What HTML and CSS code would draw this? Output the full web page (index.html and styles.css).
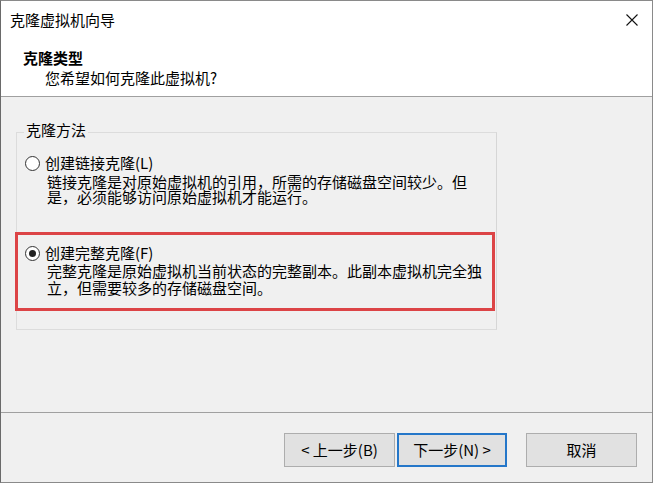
FILE: index.html
```html
<!DOCTYPE html>
<html lang="zh-CN">
<head>
<meta charset="utf-8">
<title>克隆虚拟机向导</title>
<link rel="stylesheet" href="styles.css">
</head>
<body>
<div class="window">
  <div class="titlebar">
    <span class="title">克隆虚拟机向导</span>
    <svg class="close" width="12" height="12" viewBox="0 0 12 12"><path d="M0.5 0.5 L11.5 11.5 M11.5 0.5 L0.5 11.5" stroke="#111" stroke-width="1.1" fill="none"/></svg>
  </div>
  <div class="header">
    <div class="h-title">克隆类型</div>
    <div class="h-sub">您希望如何克隆此虚拟机?</div>
  </div>
  <div class="content">
    <div class="group">
      <span class="legend">克隆方法</span>
      <div class="option">
        <div class="opt-label"><span class="radio"></span><span>创建链接克隆(L)</span></div>
        <div class="desc d1">链接克隆是对原始虚拟机的引用，所需的存储磁盘空间较少。但<br>是，必须能够访问原始虚拟机才能运行。</div>
      </div>
      <div class="option opt2">
        <div class="opt-label"><span class="radio checked"></span><span>创建完整克隆(F)</span></div>
        <div class="desc d2">完整克隆是原始虚拟机当前状态的完整副本。此副本虚拟机完全独<br>立，但需要较多的存储磁盘空间。</div>
      </div>
      <div class="highlight"></div>
    </div>
  </div>
  <div class="footer">
    <button class="btn back">&lt; 上一步(B)</button>
    <button class="btn next">下一步(N) &gt;</button>
    <button class="btn cancel">取消</button>
  </div>
</div>
</body>
</html>
```
FILE: styles.css
```css
html, body {
  margin: 0;
  padding: 0;
  background: #ffffff;
}
body {
  font-family: "Noto Sans CJK SC", "Noto Sans", sans-serif;
  font-size: 15px;
  color: #000;
}
.window {
  width: 653px;
  height: 483px;
  box-sizing: border-box;
  border: 1px solid #8a8a8a;
  border-left-color: #6a6a6a;
  display: flex;
  flex-direction: column;
  background: #f0f0f0;
}
.titlebar {
  height: 38px;
  background: #fff;
  display: flex;
  align-items: center;
  justify-content: space-between;
  padding: 0 14px 0 9px;
}
.title {
  line-height: 20px;
}
.close {
  display: block;
}
.header {
  background: #fff;
  padding: 9px 0 8px 0;
  border-bottom: 1px solid #a0a0a0;
}
.h-title {
  font-weight: 700;
  line-height: 20px;
  padding-left: 22px;
}
.h-sub {
  line-height: 20px;
  padding-left: 44px;
}
.content {
  flex: 1;
  padding: 35px 0 0 15px;
}
.group {
  position: relative;
  width: 481px;
  height: 198px;
  box-sizing: border-box;
  border: 1px solid #dcdcdc;
  border-right-color: #d6d6d6;
  padding: 20px 0 0 8px;
}
.legend {
  position: absolute;
  top: -13px;
  left: 7px;
  padding: 0 2px;
  background: #f0f0f0;
  line-height: 20px;
}
.opt-label {
  display: flex;
  align-items: center;
  line-height: 20px;
}
.radio {
  width: 15px;
  height: 15px;
  box-sizing: border-box;
  border: 1px solid #333;
  border-radius: 50%;
  background: #fff;
  margin-right: 5px;
  position: relative;
  flex: none;
}
.radio.checked::after {
  content: "";
  position: absolute;
  left: 3px;
  top: 3px;
  width: 7px;
  height: 7px;
  border-radius: 50%;
  background: #222;
}
.desc {
  margin-left: 22px;
}
.d1 {
  line-height: 15px;
  margin-top: 1px;
}
.opt2 {
  margin-top: 39px;
}
.d2 {
  line-height: 16.5px;
}
.highlight {
  position: absolute;
  left: -2px;
  top: 99px;
  width: 480px;
  height: 79px;
  box-sizing: border-box;
  border: 3px solid #dc4446;
}
.footer {
  border-top: 1px solid #a0a0a0;
  height: 69px;
  box-sizing: content-box;
  display: flex;
  justify-content: flex-end;
  align-items: flex-start;
  padding: 20px 15px 0 0;
  box-sizing: border-box;
  height: 70px;
}
.btn {
  font-family: "Noto Sans CJK SC", "Noto Sans", sans-serif;
  font-size: 15px;
  line-height: 20px;
  height: 34px;
  width: 111px;
  box-sizing: border-box;
  background: #e1e1e1;
  border: 1px solid #adadad;
  color: #000;
  padding: 0;
  margin: 0;
}
.next {
  width: 110px;
  margin-left: 2px;
  border: 2px solid #2577c9;
}
.cancel {
  margin-left: 19px;
}
```
